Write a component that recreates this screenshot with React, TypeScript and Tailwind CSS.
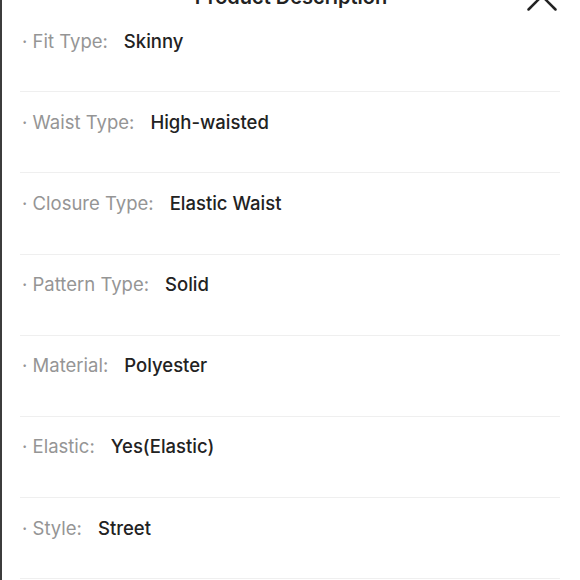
import { X } from "lucide-react";

const ITEMS: [string, string][] = [
  ["Fit Type", "Skinny"],
  ["Waist Type", "High-waisted"],
  ["Closure Type", "Elastic Waist"],
  ["Pattern Type", "Solid"],
  ["Material", "Polyester"],
  ["Elastic", "Yes(Elastic)"],
  ["Style", "Street"],
];

export default function App() {
  return (
    <div className="h-[580px] w-[580px] overflow-hidden bg-white border-l-2 border-[#3c3c3c] font-['Inter',sans-serif]">
      <header className="relative -mt-[17px] h-[28px] flex items-center justify-center">
        <h1 className="text-[20px] leading-[28px] font-semibold text-[#222]">Product Description</h1>
        <X className="absolute right-[11px] -top-[14px] w-[54px] h-[54px] text-[#222]" strokeWidth={1.1} />
      </header>

      <ul className="pl-[18px] pr-[20px]">
        {ITEMS.map(([label, value]) => (
          <li key={label} className="flex items-center pt-[17.5px] pb-[38.7px] leading-6 text-[18.5px] border-b border-[#efefef]">
            <span className="text-[#959595] pl-[2px]">· {label}:</span>
            <span className="ml-[16px] font-medium text-[#222]">{value}</span>
          </li>
        ))}
      </ul>
    </div>
  );
}
